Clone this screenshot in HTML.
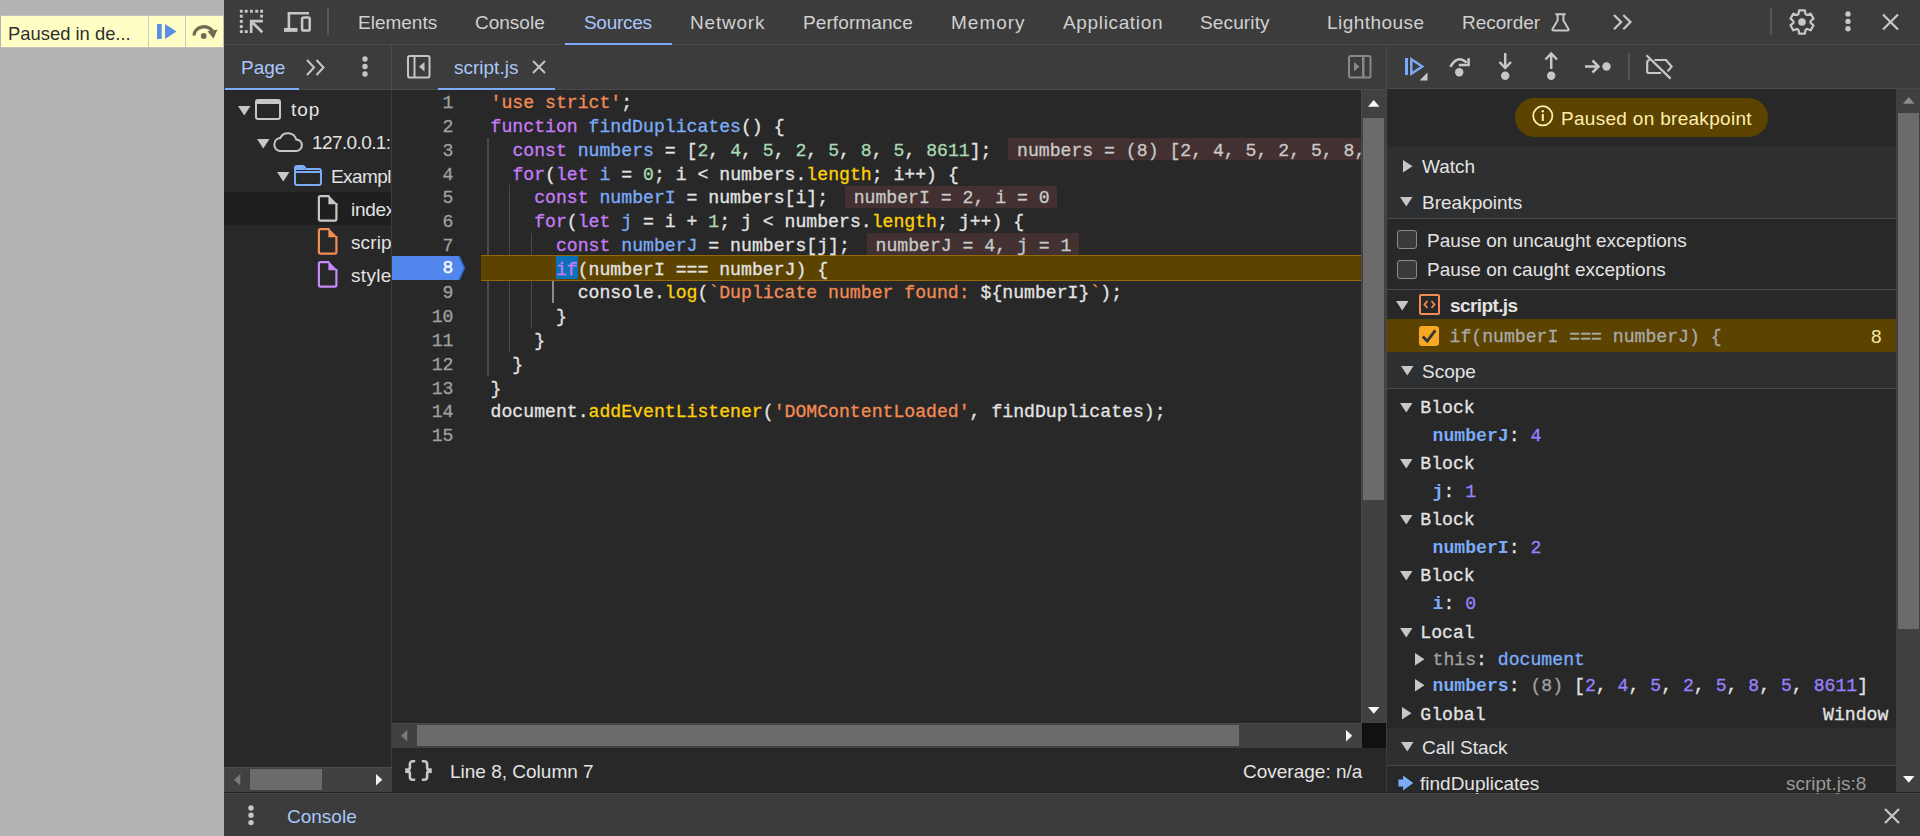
<!DOCTYPE html>
<html><head><meta charset="utf-8">
<style>
*{box-sizing:border-box;margin:0;padding:0}
html,body{width:1920px;height:836px;overflow:hidden;background:#3c3c3c;font-family:"Liberation Sans",sans-serif;color:#e3e3e3}
.a{position:absolute}
.ui{font-size:19px;white-space:nowrap;line-height:22px}
.mono{font-family:"Liberation Mono",monospace;white-space:pre;-webkit-text-stroke:0.3px currentColor}
.sm{font-size:18.15px;line-height:22px}
.code{font-size:18.15px;line-height:22px;height:22px}
svg{position:absolute;overflow:visible}
.ln{color:#a0a0a0}
.ln8{color:#ffffff;margin-top:-1.5px}
.iv{height:22.5px;line-height:22.5px;font-size:18.15px;background:#433030;color:#c7c7c7;padding-left:9px;overflow:hidden}
.k{color:#c67cf7}.d{color:#7cacf8}.s{color:#f28b54}.n{color:#a8dab5}.p{color:#fdd00a}.v{color:#e3e3e3}
</style></head>
<body>
<div class="a" style="left:0px;top:0px;width:224px;height:836px;background:#b3b3b3;"></div>
<div class="a" style="left:1px;top:15px;width:223px;height:33px;background:#ffffc5;border:1px solid #c2c2bc;border-left:none"></div>
<div class="a ui" style="left:8px;top:23px;color:#303030;font-size:18.4px">Paused in de...</div>
<div class="a" style="left:148px;top:16px;width:1px;height:31px;background:#c8c8c0;"></div>
<div class="a" style="left:185px;top:16px;width:1px;height:31px;background:#c8c8c0;"></div>
<svg style="left:157px;top:24px" width="22" height="16" viewBox="0 0 22 16"><rect x="0" y="0" width="4.7" height="15" fill="#5b8de8"/><path d="M8 0 L19.5 7.5 L8 15 Z" fill="#5b8de8"/></svg>
<svg style="left:191px;top:23.5px" width="28" height="17" viewBox="0 0 28 17"><path d="M3 11.5 A10 8.8 0 0 1 21.5 7" stroke="#6e6c52" stroke-width="3.4" fill="none"/><path d="M16.5 7.2 L26.5 5.5 L22.5 14.8 Z" fill="#6e6c52"/><circle cx="12.7" cy="12" r="2.9" fill="#6e6c52"/></svg>
<div class="a" style="left:224px;top:0px;width:1696px;height:44px;background:#3c3c3c;"></div>
<div class="a" style="left:224px;top:44px;width:1696px;height:1px;background:#494949;"></div>
<div class="a" style="left:565px;top:43px;width:107px;height:2px;background:#7cacf8;"></div>
<svg style="left:234px;top:5px" width="36" height="32" viewBox="0 0 36 32"><rect x="5.85" y="4.80" width="2.9" height="2.9" fill="#c7c7c7"/><rect x="10.75" y="4.80" width="2.9" height="2.9" fill="#c7c7c7"/><rect x="15.95" y="4.80" width="2.9" height="2.9" fill="#c7c7c7"/><rect x="21.25" y="4.80" width="2.9" height="2.9" fill="#c7c7c7"/><rect x="26.15" y="4.80" width="2.9" height="2.9" fill="#c7c7c7"/><rect x="5.85" y="9.75" width="2.9" height="2.9" fill="#c7c7c7"/><rect x="5.85" y="14.95" width="2.9" height="2.9" fill="#c7c7c7"/><rect x="5.85" y="20.15" width="2.9" height="2.9" fill="#c7c7c7"/><rect x="5.85" y="25.15" width="2.9" height="2.9" fill="#c7c7c7"/><rect x="26.15" y="9.75" width="2.9" height="2.9" fill="#c7c7c7"/><rect x="10.75" y="25.15" width="2.9" height="2.9" fill="#c7c7c7"/><path d="M16 16.2 H28.9 M17.2 14.8 V27.9 M17.6 16.6 L28.3 27.3" stroke="#c7c7c7" stroke-width="2.7" fill="none"/></svg>
<svg style="left:284px;top:11px" width="28" height="22" viewBox="0 0 28 22"><path d="M4.9 18 V2.3 H25" stroke="#c7c7c7" stroke-width="2.6" fill="none"/><path d="M0 18.9 H13.5" stroke="#c7c7c7" stroke-width="3.9" fill="none"/><rect x="18.1" y="6.4" width="7.6" height="13.1" rx="1.6" stroke="#c7c7c7" stroke-width="2.5" fill="none"/></svg>
<div class="a" style="left:327px;top:8px;width:2px;height:27px;background:#575757;"></div>
<div class="a ui" style="left:358px;top:12px;color:#d0d0d0;letter-spacing:0px">Elements</div>
<div class="a ui" style="left:475px;top:12px;color:#d0d0d0;letter-spacing:0px">Console</div>
<div class="a ui" style="left:584px;top:12px;color:#a8c7fa;letter-spacing:-0.3px">Sources</div>
<div class="a ui" style="left:690px;top:12px;color:#d0d0d0;letter-spacing:0.8px">Network</div>
<div class="a ui" style="left:803px;top:12px;color:#d0d0d0;letter-spacing:0.1px">Performance</div>
<div class="a ui" style="left:951px;top:12px;color:#d0d0d0;letter-spacing:1.0px">Memory</div>
<div class="a ui" style="left:1063px;top:12px;color:#d0d0d0;letter-spacing:0.65px">Application</div>
<div class="a ui" style="left:1200px;top:12px;color:#d0d0d0;letter-spacing:0.14px">Security</div>
<div class="a ui" style="left:1327px;top:12px;color:#d0d0d0;letter-spacing:0.45px">Lighthouse</div>
<div class="a ui" style="left:1462px;top:12px;color:#d0d0d0;letter-spacing:0px">Recorder</div>
<svg style="left:1551px;top:13px" width="19" height="19" viewBox="0 0 19 19"><path d="M4.3 1.2 H14.7 M6.6 1.2 V7.6 L1.5 16 Q1 17.6 2.6 17.6 H16.4 Q18 17.6 17.5 16 L12.4 7.6 V1.2" stroke="#c7c7c7" stroke-width="2" fill="none" stroke-linejoin="round"/></svg>
<svg style="left:1613px;top:13.5px" width="20" height="17" viewBox="0 0 20 17"><path d="M1 1 L8.2 8.1 L1 15.2 M10.3 1 L17.5 8.1 L10.3 15.2" stroke="#c7c7c7" stroke-width="2.2" fill="none"/></svg>
<div class="a" style="left:1770px;top:8px;width:2px;height:27px;background:#575757;"></div>
<svg style="left:1788.5px;top:8.5px" width="26" height="26" viewBox="0 0 26 26"><path d="M9.50 5.14 L10.10 1.36 L15.90 1.36 L16.50 5.14 L18.05 6.04 L21.63 4.66 L24.54 9.69 L21.55 12.10 L21.55 13.90 L24.54 16.31 L21.63 21.34 L18.05 19.96 L16.50 20.86 L15.90 24.64 L10.10 24.64 L9.50 20.86 L7.95 19.96 L4.37 21.34 L1.46 16.31 L4.45 13.90 L4.45 12.10 L1.46 9.69 L4.37 4.66 L7.95 6.04 Z" stroke="#c7c7c7" stroke-width="2.2" fill="none" stroke-linejoin="round"/><circle cx="13" cy="13" r="3.8" fill="#c7c7c7"/></svg>
<svg style="left:1844.5px;top:11.3px" width="6" height="21" viewBox="0 0 6 21"><circle cx="3" cy="3.0" r="2.7" fill="#c7c7c7"/><circle cx="3" cy="10.4" r="2.7" fill="#c7c7c7"/><circle cx="3" cy="17.8" r="2.7" fill="#c7c7c7"/></svg>
<svg style="left:1882px;top:14px" width="17" height="16" viewBox="0 0 17 16"><path d="M1 0.5 L16 15.5 M16 0.5 L1 15.5" stroke="#c7c7c7" stroke-width="2.2" fill="none"/></svg>
<div class="a" style="left:224px;top:45px;width:1696px;height:44px;background:#3c3c3c;"></div>
<div class="a" style="left:224px;top:89px;width:1163px;height:1px;background:#494949;"></div>
<div class="a" style="left:1387px;top:88px;width:533px;height:1px;background:#494949;"></div>
<div class="a" style="left:391px;top:45px;width:1px;height:45px;background:#494949;"></div>
<div class="a" style="left:1386px;top:45px;width:1px;height:44px;background:#494949;"></div>
<div class="a" style="left:225px;top:88px;width:74px;height:2px;background:#7cacf8;"></div>
<div class="a" style="left:438px;top:88px;width:117px;height:2px;background:#7cacf8;"></div>
<div class="a ui" style="left:241px;top:57px;color:#a8c7fa;">Page</div>
<svg style="left:306px;top:59px" width="20" height="17" viewBox="0 0 20 17"><path d="M1 1 L8 8.5 L1 16 M10.5 1 L17.5 8.5 L10.5 16" stroke="#c7c7c7" stroke-width="2" fill="none"/></svg>
<svg style="left:362px;top:55.5px" width="6" height="21" viewBox="0 0 6 21"><circle cx="3" cy="3.0" r="2.7" fill="#c7c7c7"/><circle cx="3" cy="10.5" r="2.7" fill="#c7c7c7"/><circle cx="3" cy="18.0" r="2.7" fill="#c7c7c7"/></svg>
<svg style="left:407px;top:54.5px" width="24" height="24" viewBox="0 0 24 24"><rect x="1" y="1" width="21.5" height="21.5" rx="1.8" stroke="#c4c4c4" stroke-width="2" fill="none"/><rect x="6.5" y="1" width="2" height="21.5" fill="#c4c4c4"/><path d="M17.5 7 L12 11.8 L17.5 16.5 Z" fill="#c4c4c4"/></svg>
<div class="a ui" style="left:454px;top:57px;color:#a8c7fa;">script.js</div>
<svg style="left:532px;top:60px" width="14" height="14" viewBox="0 0 14 14"><path d="M1 1 L13 13 M13 1 L1 13" stroke="#c7c7c7" stroke-width="1.8" fill="none"/></svg>
<svg style="left:1347.5px;top:54.5px" width="24" height="24" viewBox="0 0 24 24"><rect x="1" y="1" width="21.5" height="21.5" rx="1.8" stroke="#878787" stroke-width="2" fill="none"/><rect x="14" y="1" width="2.5" height="21.5" fill="#878787"/><path d="M6 7 L11.5 11.8 L6 16.5 Z" fill="#878787"/></svg>
<svg style="left:1404px;top:57px" width="24" height="24" viewBox="0 0 24 24"><rect x="1" y="1" width="3" height="17" fill="#7cacf8"/><path d="M7.3 2.3 L18.3 9.5 L7.3 16.7 Z" stroke="#7cacf8" stroke-width="2.4" fill="none"/><path d="M15.5 23.5 L23.5 23.5 L23.5 15.5 Z" fill="#c7c7c7"/></svg>
<svg style="left:1449px;top:57px" width="22" height="22" viewBox="0 0 22 22"><path d="M1.3 9.8 Q8.5 -2.8 17.6 5.6" stroke="#c7c7c7" stroke-width="2.5" fill="none"/><path d="M9.8 8 H19.6 V1.2" stroke="#c7c7c7" stroke-width="2.5" fill="none"/><circle cx="10.2" cy="15.3" r="4.2" fill="#c7c7c7"/></svg>
<svg style="left:1498px;top:52px" width="16" height="26" viewBox="0 0 16 26"><path d="M7.2 1 V16 M1.5 10 L7.2 16 L13 10" stroke="#c7c7c7" stroke-width="2.5" fill="none"/><circle cx="7.2" cy="23.7" r="4.2" fill="#c7c7c7"/></svg>
<svg style="left:1544px;top:52px" width="16" height="26" viewBox="0 0 16 26"><path d="M7.2 17 V1.5 M1.5 7.5 L7.2 1.5 L13 7.5" stroke="#c7c7c7" stroke-width="2.5" fill="none"/><circle cx="7.2" cy="23.7" r="4.2" fill="#c7c7c7"/></svg>
<svg style="left:1584px;top:59px" width="28" height="16" viewBox="0 0 28 16"><path d="M1 7.5 H14.5 M8.5 1.5 L14.5 7.5 L8.5 13.5" stroke="#c7c7c7" stroke-width="2.5" fill="none"/><circle cx="22.5" cy="7.5" r="4.2" fill="#c7c7c7"/></svg>
<div class="a" style="left:1627.5px;top:53px;width:2px;height:27px;background:#555555;"></div>
<svg style="left:1645px;top:54px" width="28" height="26" viewBox="0 0 28 26"><path d="M2.2 19 V8.6 Q2.2 6 4.8 6 M9.5 6 H21 L26.6 12.6 L22.6 17.4 M2.2 19 H16" stroke="#c7c7c7" stroke-width="2.2" fill="none" stroke-linejoin="miter"/><path d="M1.5 1.2 L25.6 24.6" stroke="#c7c7c7" stroke-width="2.2"/></svg>
<div class="a" style="left:224px;top:90px;width:167px;height:703px;background:#282828;"></div>
<div class="a" style="left:224px;top:192px;width:167px;height:33px;background:#1f1f1f;"></div>
<svg style="left:238px;top:106px" width="13" height="10" viewBox="0 0 13 10"><path d="M0 0 H12.5 L6.25 9.5 Z" fill="#c7c7c7"/></svg>
<svg style="left:255px;top:99px" width="26" height="21" viewBox="0 0 26 21"><rect x="1" y="1" width="24" height="19" rx="2" stroke="#c7c7c7" stroke-width="2" fill="none"/><rect x="1" y="1" width="24" height="4" fill="#c7c7c7"/></svg>
<div class="a" style="left:224px;top:90px;width:167px;height:676px;overflow:hidden">
<div class="a ui" style="left:67px;top:9px;color:#e3e3e3;letter-spacing:1.0px">top</div>
<div class="a ui" style="left:88px;top:42px;color:#e3e3e3;letter-spacing:-0.6px">127.0.0.1:</div>
<div class="a ui" style="left:107px;top:76px;color:#e3e3e3;letter-spacing:-0.6px">Example</div>
<div class="a ui" style="left:127px;top:109px;color:#e3e3e3;letter-spacing:-0.3px">index.html</div>
<div class="a ui" style="left:127px;top:142px;color:#e3e3e3;letter-spacing:0.1px">script.js</div>
<div class="a ui" style="left:127px;top:175px;color:#e3e3e3;letter-spacing:0.3px">style.css</div>
</div>
<svg style="left:257px;top:139px" width="13" height="10" viewBox="0 0 13 10"><path d="M0 0 H12.5 L6.25 9.5 Z" fill="#c7c7c7"/></svg>
<svg style="left:272px;top:133px" width="31" height="19" viewBox="0 0 31 19"><path d="M7.5 18 H24 A5.8 5.8 0 0 0 24.2 6.4 A8.6 8.6 0 0 0 8.2 5 A6.6 6.6 0 0 0 7.5 18 Z" stroke="#c7c7c7" stroke-width="2" fill="none"/></svg>
<svg style="left:277px;top:172px" width="13" height="10" viewBox="0 0 13 10"><path d="M0 0 H12.5 L6.25 9.5 Z" fill="#c7c7c7"/></svg>
<svg style="left:294px;top:165px" width="28" height="21" viewBox="0 0 28 21"><path d="M1 3 A2 2 0 0 1 3 1 H9.5 L12 4 H25 A2 2 0 0 1 27 6 V18 A2 2 0 0 1 25 20 H3 A2 2 0 0 1 1 18 Z" stroke="#7cacf8" stroke-width="2" fill="none"/><path d="M1 7 H27" stroke="#7cacf8" stroke-width="2"/><path d="M2 2 H9 L11.5 5 H2 Z" fill="#7cacf8"/></svg>
<svg style="left:317px;top:195px" width="21" height="27" viewBox="0 0 21 27"><path d="M12.5 1.1 H3.4 Q1.9 1.1 1.9 2.6 V24.1 Q1.9 25.6 3.4 25.6 H17.9 Q19.4 25.6 19.4 24.1 V8.1" stroke="#c7c7c7" stroke-width="2.2" fill="none"/><path d="M11.4 0 V9.2 H20.5 Z" fill="#c7c7c7"/></svg>
<svg style="left:317px;top:228px" width="21" height="27" viewBox="0 0 21 27"><path d="M12.5 1.1 H3.4 Q1.9 1.1 1.9 2.6 V24.1 Q1.9 25.6 3.4 25.6 H17.9 Q19.4 25.6 19.4 24.1 V8.1" stroke="#f28b54" stroke-width="2.2" fill="none"/><path d="M11.4 0 V9.2 H20.5 Z" fill="#f28b54"/></svg>
<svg style="left:317px;top:261px" width="21" height="27" viewBox="0 0 21 27"><path d="M12.5 1.1 H3.4 Q1.9 1.1 1.9 2.6 V24.1 Q1.9 25.6 3.4 25.6 H17.9 Q19.4 25.6 19.4 24.1 V8.1" stroke="#c58af9" stroke-width="2.2" fill="none"/><path d="M11.4 0 V9.2 H20.5 Z" fill="#c58af9"/></svg>
<div class="a" style="left:224px;top:767px;width:168px;height:25px;background:#414141;border-left:1px solid #494949;border-top:1px solid #494949"></div>
<div class="a" style="left:250px;top:769px;width:72px;height:21px;background:#6b6b6b;"></div>
<svg style="left:233.9px;top:773.8px" width="7" height="12" viewBox="0 0 7 12"><path d="M6.3 0 V11.4 L0 5.7 Z" fill="#7a7a7a"/></svg>
<svg style="left:375.8px;top:773.8px" width="7" height="12" viewBox="0 0 7 12"><path d="M0 0 V11.4 L6.3 5.7 Z" fill="#f0f0f0"/></svg>
<div class="a" style="left:392px;top:90px;width:994px;height:656px;background:#282828;"></div>
<div class="a" style="left:487.2px;top:137.8px;width:1.4px;height:237.8px;background:#4a4a4a;"></div>
<div class="a" style="left:508.9px;top:185.3px;width:1.4px;height:166.4px;background:#4a4a4a;"></div>
<div class="a" style="left:530.7px;top:232.8px;width:1.4px;height:95.1px;background:#4a4a4a;"></div>
<div class="a" style="left:552px;top:281px;width:2.2px;height:22px;background:#8a8a8a;"></div>
<div class="a" style="left:481px;top:255px;width:881px;height:26px;background:#5c4300;border-top:1px solid #94690a;border-bottom:1px solid #94690a"></div>
<svg style="left:392px;top:256px" width="74" height="24" viewBox="0 0 74 24"><path d="M0 0 H67.7 L73.1 12 L67.7 24 H0 Z" fill="#2f6fe0"/><path d="M0 0 H66 L71.2 12 L66 24 H0 Z" fill="#5286ec"/></svg>
<div class="a" style="left:556px;top:256px;width:22.2px;height:23px;background:#0b72b9;"></div>
<div class="a mono code ln" style="left:392px;top:92.20px;width:61.5px;text-align:right">1</div>
<div class="a mono code v" style="left:490.6px;top:92.20px"><span class=s>'use strict'</span>;</div>
<div class="a mono code ln" style="left:392px;top:115.97px;width:61.5px;text-align:right">2</div>
<div class="a mono code v" style="left:490.6px;top:115.97px"><span class=k>function</span> <span class=d>findDuplicates</span>() {</div>
<div class="a mono code ln" style="left:392px;top:139.75px;width:61.5px;text-align:right">3</div>
<div class="a mono code v" style="left:490.6px;top:139.75px">  <span class=k>const</span> <span class=d>numbers</span> = [<span class=n>2</span>, <span class=n>4</span>, <span class=n>5</span>, <span class=n>2</span>, <span class=n>5</span>, <span class=n>8</span>, <span class=n>5</span>, <span class=n>8611</span>];</div>
<div class="a mono code ln" style="left:392px;top:163.52px;width:61.5px;text-align:right">4</div>
<div class="a mono code v" style="left:490.6px;top:163.52px">  <span class=k>for</span>(<span class=k>let</span> <span class=d>i</span> = <span class=n>0</span>; i &lt; numbers.<span class=p>length</span>; i++) {</div>
<div class="a mono code ln" style="left:392px;top:187.30px;width:61.5px;text-align:right">5</div>
<div class="a mono code v" style="left:490.6px;top:187.30px">    <span class=k>const</span> <span class=d>numberI</span> = numbers[i];</div>
<div class="a mono code ln" style="left:392px;top:211.07px;width:61.5px;text-align:right">6</div>
<div class="a mono code v" style="left:490.6px;top:211.07px">    <span class=k>for</span>(<span class=k>let</span> <span class=d>j</span> = i + <span class=n>1</span>; j &lt; numbers.<span class=p>length</span>; j++) {</div>
<div class="a mono code ln" style="left:392px;top:234.85px;width:61.5px;text-align:right">7</div>
<div class="a mono code v" style="left:490.6px;top:234.85px">      <span class=k>const</span> <span class=d>numberJ</span> = numbers[j];</div>
<div class="a mono code ln8" style="left:392px;top:258.62px;width:61.5px;text-align:right">8</div>
<div class="a mono code v" style="left:490.6px;top:258.62px">      <span class=k>if</span>(numberI === numberJ) {</div>
<div class="a mono code ln" style="left:392px;top:282.40px;width:61.5px;text-align:right">9</div>
<div class="a mono code v" style="left:490.6px;top:282.40px">        console.<span class=p>log</span>(<span class=s>`Duplicate number found: </span>${numberI}<span class=s>`</span>);</div>
<div class="a mono code ln" style="left:392px;top:306.18px;width:61.5px;text-align:right">10</div>
<div class="a mono code v" style="left:490.6px;top:306.18px">      }</div>
<div class="a mono code ln" style="left:392px;top:329.95px;width:61.5px;text-align:right">11</div>
<div class="a mono code v" style="left:490.6px;top:329.95px">    }</div>
<div class="a mono code ln" style="left:392px;top:353.72px;width:61.5px;text-align:right">12</div>
<div class="a mono code v" style="left:490.6px;top:353.72px">  }</div>
<div class="a mono code ln" style="left:392px;top:377.50px;width:61.5px;text-align:right">13</div>
<div class="a mono code v" style="left:490.6px;top:377.50px">}</div>
<div class="a mono code ln" style="left:392px;top:401.27px;width:61.5px;text-align:right">14</div>
<div class="a mono code v" style="left:490.6px;top:401.27px">document.<span class=p>addEventListener</span>(<span class=s>'DOMContentLoaded'</span>, findDuplicates);</div>
<div class="a mono code ln" style="left:392px;top:425.05px;width:61.5px;text-align:right">15</div>
<div class="a mono code v" style="left:490.6px;top:425.05px"></div>
<div class="a" style="left:1008.0px;top:137.9px;width:354.0px;height:22px;background:#433030;"></div>
<div class="a mono code" style="left:1017.0px;top:139.75px;width:345.0px;overflow:hidden;color:#c9c9c9">numbers = (8) [2, 4, 5, 2, 5, 8, 5, 8611]</div>
<div class="a" style="left:844.7px;top:185.5px;width:212px;height:22px;background:#433030;"></div>
<div class="a mono code" style="left:853.7px;top:187.30px;width:203.0px;overflow:hidden;color:#c9c9c9">numberI = 2, i = 0</div>
<div class="a" style="left:866.5px;top:233.0px;width:212px;height:22px;background:#433030;"></div>
<div class="a mono code" style="left:875.5px;top:234.85px;width:203.0px;overflow:hidden;color:#c9c9c9">numberJ = 4, j = 1</div>
<div class="a" style="left:1361px;top:90px;width:26px;height:633px;background:#414141;border-left:1px solid #494949;border-right:1px solid #494949"></div>
<div class="a" style="left:1363px;top:118px;width:21px;height:382px;background:#6b6b6b;"></div>
<svg style="left:1367.7px;top:99.5px" width="12" height="7" viewBox="0 0 12 7"><path d="M0 6.7 L5.75 0 L11.5 6.7 Z" fill="#f8f8f8"/></svg>
<svg style="left:1367.7px;top:706.5px" width="12" height="7" viewBox="0 0 12 7"><path d="M0 0 L5.75 6.7 L11.5 0 Z" fill="#f8f8f8"/></svg>
<div class="a" style="left:392px;top:723px;width:970px;height:26px;background:#414141;border-top:1px solid #494949;border-bottom:1px solid #494949"></div>
<div class="a" style="left:417px;top:725px;width:822px;height:21px;background:#6b6b6b;"></div>
<svg style="left:400.8px;top:729.8px" width="7" height="12" viewBox="0 0 7 12"><path d="M6.3 0 V11.4 L0 5.7 Z" fill="#7a7a7a"/></svg>
<svg style="left:1346.2px;top:729.8px" width="7" height="12" viewBox="0 0 7 12"><path d="M0 0 V11.4 L6.3 5.7 Z" fill="#f0f0f0"/></svg>
<div class="a" style="left:1362px;top:723px;width:24px;height:25px;background:#111111;"></div>
<div class="a" style="left:392px;top:748px;width:994px;height:45px;background:#282828;"></div>
<svg style="left:404px;top:759px" width="29" height="23" viewBox="0 0 29 23"><path d="M11.2 2.3 H8.8 Q5.9 2.3 5.9 5.3 V8.3 Q5.9 11.6 2.3 11.6 Q5.9 11.6 5.9 14.9 V17.9 Q5.9 20.7 8.8 20.7 H11.2 M17.8 2.3 H20.2 Q23.1 2.3 23.1 5.3 V8.3 Q23.1 11.6 26.7 11.6 Q23.1 11.6 23.1 14.9 V17.9 Q23.1 20.7 20.2 20.7 H17.8" stroke="#c7c7c7" stroke-width="2.6" fill="none"/><rect x="1.2" y="9.3" width="3.6" height="4.8" fill="#c7c7c7"/><rect x="24.2" y="9.3" width="3.6" height="4.8" fill="#c7c7c7"/></svg>
<div class="a ui" style="left:450px;top:761px;color:#e3e3e3;">Line 8, Column 7</div>
<div class="a ui" style="left:1243px;top:761px;color:#e3e3e3;">Coverage: n/a</div>
<div class="a" style="left:224px;top:792px;width:1696px;height:1px;background:#242424;"></div>
<div class="a" style="left:224px;top:793px;width:1696px;height:1px;background:#494949;"></div>
<div class="a" style="left:224px;top:794px;width:1696px;height:42px;background:#3c3c3c;"></div>
<svg style="left:248px;top:805px" width="6" height="21" viewBox="0 0 6 21"><circle cx="3" cy="3.0" r="2.7" fill="#c7c7c7"/><circle cx="3" cy="10.3" r="2.7" fill="#c7c7c7"/><circle cx="3" cy="17.6" r="2.7" fill="#c7c7c7"/></svg>
<div class="a ui" style="left:287px;top:806px;color:#a8c7fa;">Console</div>
<svg style="left:1884px;top:808px" width="16" height="16" viewBox="0 0 16 16"><path d="M1 1 L15 15 M15 1 L1 15" stroke="#c7c7c7" stroke-width="2.2" fill="none"/></svg>
<div class="a" style="left:1387px;top:89px;width:533px;height:704px;background:#282828;"></div>
<div class="a" style="left:1515px;top:98px;width:253px;height:39px;background:#5c4300;border-radius:19.5px"></div>
<svg style="left:1532px;top:105px" width="22" height="22" viewBox="0 0 22 22"><circle cx="10.8" cy="10.8" r="9.6" stroke="#fdeeae" stroke-width="1.8" fill="none"/><rect x="9.8" y="9" width="2" height="7" fill="#fdeeae"/><circle cx="10.8" cy="6.3" r="1.2" fill="#fdeeae"/></svg>
<div class="a ui" style="left:1561px;top:108px;color:#fdeeae;letter-spacing:0.3px">Paused on breakpoint</div>
<div class="a" style="left:1387px;top:147px;width:509px;height:71px;background:#2e2f31;"></div>
<div class="a" style="left:1387px;top:218px;width:509px;height:1px;background:#494949;"></div>
<svg style="left:1403px;top:160px" width="10" height="13" viewBox="0 0 10 13"><path d="M0 0 V12.5 L9.5 6.25 Z" fill="#c7c7c7"/></svg>
<div class="a ui" style="left:1422px;top:156px;color:#e3e3e3;">Watch</div>
<svg style="left:1400px;top:197px" width="13" height="10" viewBox="0 0 13 10"><path d="M0 0 H12.5 L6.25 9.5 Z" fill="#c7c7c7"/></svg>
<div class="a ui" style="left:1422px;top:192px;color:#e3e3e3;">Breakpoints</div>
<div class="a" style="left:1397px;top:230px;width:20px;height:19px;background:#3a3a3a;border:1.6px solid #8b8b8b;border-radius:3px"></div>
<div class="a" style="left:1397px;top:260px;width:20px;height:19px;background:#3a3a3a;border:1.6px solid #8b8b8b;border-radius:3px"></div>
<div class="a ui" style="left:1427px;top:230px;color:#e3e3e3;">Pause on uncaught exceptions</div>
<div class="a ui" style="left:1427px;top:259px;color:#e3e3e3;">Pause on caught exceptions</div>
<div class="a" style="left:1387px;top:289px;width:509px;height:1px;background:#494949;"></div>
<svg style="left:1396px;top:301px" width="13" height="10" viewBox="0 0 13 10"><path d="M0 0 H12.5 L6.25 9.5 Z" fill="#c7c7c7"/></svg>
<svg style="left:1419px;top:294px" width="21" height="21" viewBox="0 0 21 21"><rect x="1" y="1" width="19" height="19" rx="1" stroke="#f28b54" stroke-width="2" fill="none"/><path d="M8.5 7 L5.5 10.5 L8.5 14 M12.5 7 L15.5 10.5 L12.5 14" stroke="#f28b54" stroke-width="1.8" fill="none"/></svg>
<div class="a ui" style="left:1450px;top:295px;color:#e3e3e3;font-weight:bold;letter-spacing:-0.6px">script.js</div>
<div class="a" style="left:1387px;top:319px;width:509px;height:33px;background:#5c4300;"></div>
<svg style="left:1419px;top:326px" width="20" height="20" viewBox="0 0 20 20"><rect x="0" y="0" width="20" height="20" rx="3" fill="#f9a825"/><path d="M3.8 10.5 L8.2 15 L16.3 4.3" stroke="#333" stroke-width="2.8" fill="none"/></svg>
<div class="a mono sm" style="left:1449.5px;top:325.6px;color:#a9a9a9;">if(numberI === numberJ) {</div>
<div class="a ui" style="left:1871px;top:326px;color:#f3e6a6;">8</div>
<div class="a" style="left:1387px;top:352px;width:509px;height:36px;background:#2e2f31;"></div>
<div class="a" style="left:1387px;top:388px;width:509px;height:1px;background:#494949;"></div>
<svg style="left:1401px;top:366px" width="13" height="10" viewBox="0 0 13 10"><path d="M0 0 H12.5 L6.25 9.5 Z" fill="#c7c7c7"/></svg>
<div class="a ui" style="left:1422px;top:361px;color:#e3e3e3;">Scope</div>
<svg style="left:1400px;top:403px" width="13" height="10" viewBox="0 0 13 10"><path d="M0 0 H12.5 L6.25 9.5 Z" fill="#c7c7c7"/></svg>
<div class="a mono sm" style="left:1420.3px;top:397px;color:#e3e3e3;"><span style="color:#e3e3e3">Block</span></div>
<div class="a mono sm" style="left:1432.5px;top:425px;color:#e3e3e3;"><span style="color:#7cacf8;font-weight:bold;-webkit-text-stroke:0">numberJ</span><span style="color:#e3e3e3">: </span><span style="color:#9980ff">4</span></div>
<svg style="left:1400px;top:459px" width="13" height="10" viewBox="0 0 13 10"><path d="M0 0 H12.5 L6.25 9.5 Z" fill="#c7c7c7"/></svg>
<div class="a mono sm" style="left:1420.3px;top:453px;color:#e3e3e3;"><span style="color:#e3e3e3">Block</span></div>
<div class="a mono sm" style="left:1432.5px;top:481px;color:#e3e3e3;"><span style="color:#7cacf8;font-weight:bold;-webkit-text-stroke:0">j</span><span style="color:#e3e3e3">: </span><span style="color:#9980ff">1</span></div>
<svg style="left:1400px;top:515px" width="13" height="10" viewBox="0 0 13 10"><path d="M0 0 H12.5 L6.25 9.5 Z" fill="#c7c7c7"/></svg>
<div class="a mono sm" style="left:1420.3px;top:509px;color:#e3e3e3;"><span style="color:#e3e3e3">Block</span></div>
<div class="a mono sm" style="left:1432.5px;top:537px;color:#e3e3e3;"><span style="color:#7cacf8;font-weight:bold;-webkit-text-stroke:0">numberI</span><span style="color:#e3e3e3">: </span><span style="color:#9980ff">2</span></div>
<svg style="left:1400px;top:571px" width="13" height="10" viewBox="0 0 13 10"><path d="M0 0 H12.5 L6.25 9.5 Z" fill="#c7c7c7"/></svg>
<div class="a mono sm" style="left:1420.3px;top:565px;color:#e3e3e3;"><span style="color:#e3e3e3">Block</span></div>
<div class="a mono sm" style="left:1432.5px;top:593px;color:#e3e3e3;"><span style="color:#7cacf8;font-weight:bold;-webkit-text-stroke:0">i</span><span style="color:#e3e3e3">: </span><span style="color:#9980ff">0</span></div>
<svg style="left:1400px;top:628px" width="13" height="10" viewBox="0 0 13 10"><path d="M0 0 H12.5 L6.25 9.5 Z" fill="#c7c7c7"/></svg>
<div class="a mono sm" style="left:1420.3px;top:622px;color:#e3e3e3;"><span style="color:#e3e3e3">Local</span></div>
<svg style="left:1415px;top:653px" width="10" height="13" viewBox="0 0 10 13"><path d="M0 0 V12.5 L9.5 6.25 Z" fill="#c7c7c7"/></svg>
<div class="a mono sm" style="left:1432.5px;top:649px;color:#e3e3e3;"><span style="color:#a0a0a0">this</span><span style="color:#e3e3e3">: </span><span style="color:#7cacf8">document</span></div>
<svg style="left:1415px;top:679px" width="10" height="13" viewBox="0 0 10 13"><path d="M0 0 V12.5 L9.5 6.25 Z" fill="#c7c7c7"/></svg>
<div class="a mono sm" style="left:1432.5px;top:675px;color:#e3e3e3;"><span style="color:#7cacf8;font-weight:bold;-webkit-text-stroke:0">numbers</span><span style="color:#e3e3e3">: </span><span style="color:#a0a0a0">(8)</span> <span style="color:#e3e3e3">[</span><span style="color:#9980ff">2</span><span style="color:#e3e3e3">, </span><span style="color:#9980ff">4</span><span style="color:#e3e3e3">, </span><span style="color:#9980ff">5</span><span style="color:#e3e3e3">, </span><span style="color:#9980ff">2</span><span style="color:#e3e3e3">, </span><span style="color:#9980ff">5</span><span style="color:#e3e3e3">, </span><span style="color:#9980ff">8</span><span style="color:#e3e3e3">, </span><span style="color:#9980ff">5</span><span style="color:#e3e3e3">, </span><span style="color:#9980ff">8611</span><span style="color:#e3e3e3">]</span></div>
<svg style="left:1402px;top:707px" width="10" height="13" viewBox="0 0 10 13"><path d="M0 0 V12.5 L9.5 6.25 Z" fill="#c7c7c7"/></svg>
<div class="a mono sm" style="left:1420.3px;top:704px;color:#e3e3e3;"><span style="color:#e3e3e3">Global</span></div>
<div class="a mono sm" style="left:1823px;top:704px;color:#e3e3e3;"><span style="color:#e3e3e3">Window</span></div>
<div class="a" style="left:1387px;top:728px;width:509px;height:37px;background:#2e2f31;"></div>
<div class="a" style="left:1387px;top:765px;width:509px;height:1px;background:#494949;"></div>
<svg style="left:1401px;top:742px" width="13" height="10" viewBox="0 0 13 10"><path d="M0 0 H12.5 L6.25 9.5 Z" fill="#c7c7c7"/></svg>
<div class="a ui" style="left:1422px;top:737px;color:#e3e3e3;">Call Stack</div>
<svg style="left:1398px;top:774.5px" width="16" height="16" viewBox="0 0 16 16"><path d="M0.4 4.6 H5.1 V0.4 L15.3 8 L5.1 15.6 V11.5 H0.4 Z" fill="#7cacf8"/></svg>
<div class="a ui" style="left:1420px;top:773px;color:#e3e3e3;">findDuplicates</div>
<div class="a ui" style="left:1786px;top:773px;color:#9a9a9a;">script.js:8</div>
<div class="a" style="left:1387px;top:792px;width:533px;height:1px;background:#242424;"></div>
<div class="a" style="left:1896px;top:89px;width:24px;height:703px;background:#404040;"></div>
<div class="a" style="left:1898px;top:113px;width:21px;height:516px;background:#6b6b6b;"></div>
<svg style="left:1902.7px;top:97.4px" width="12" height="7" viewBox="0 0 12 7"><path d="M0 6.7 L5.75 0 L11.5 6.7 Z" fill="#8a8a8a"/></svg>
<svg style="left:1902.7px;top:776px" width="12" height="7" viewBox="0 0 12 7"><path d="M0 0 L5.75 6.7 L11.5 0 Z" fill="#f8f8f8"/></svg>
</body></html>
